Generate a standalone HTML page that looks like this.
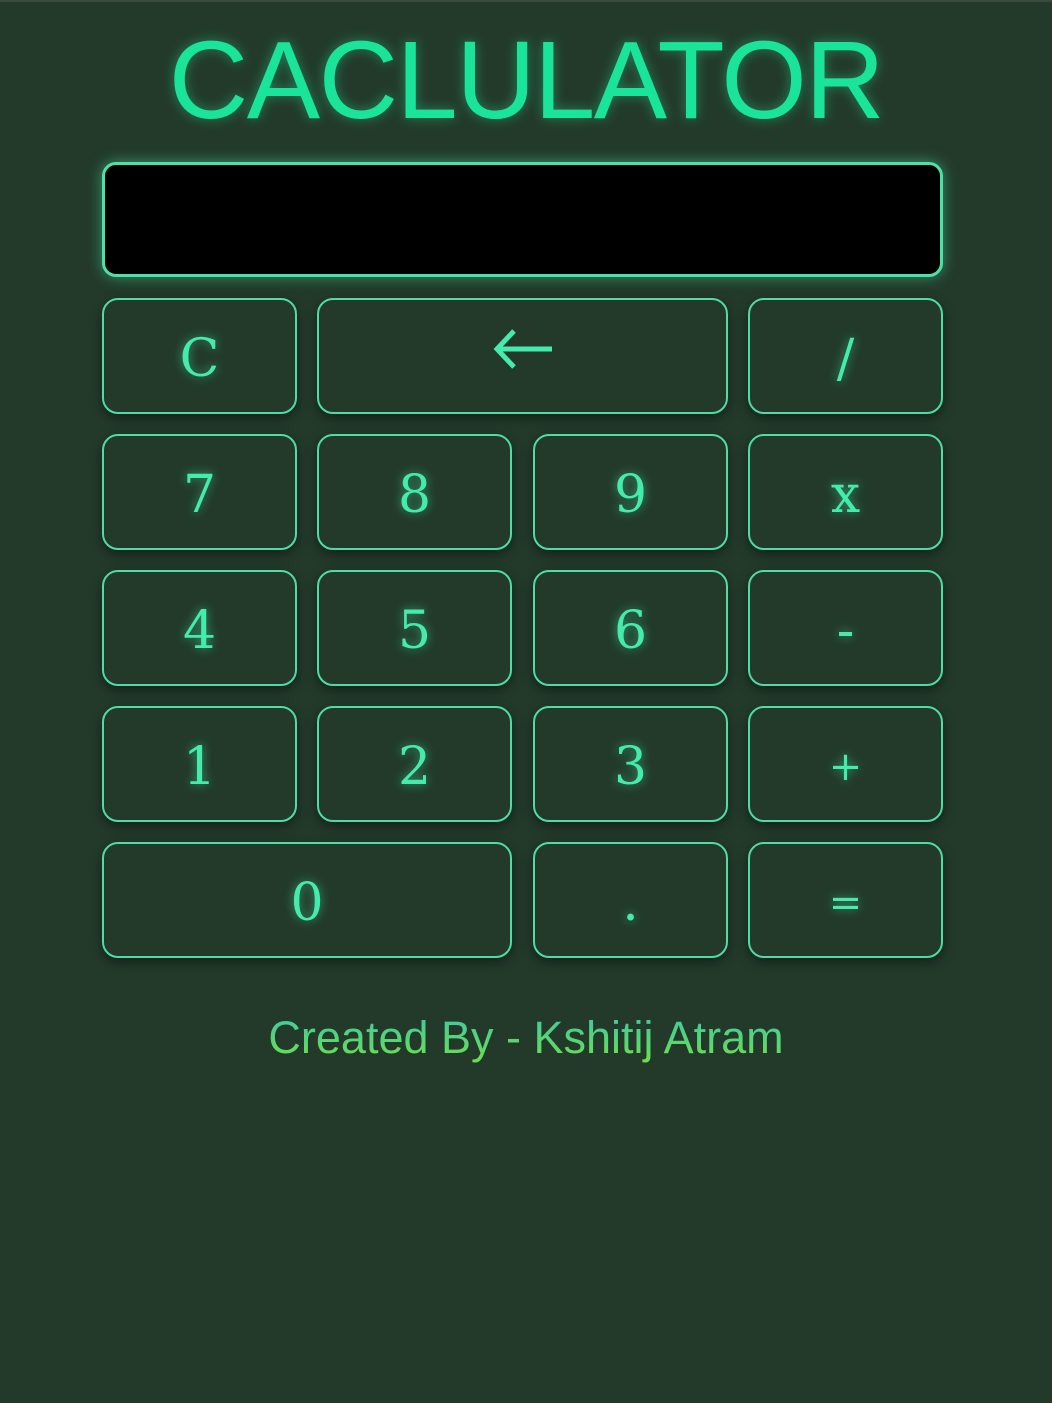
<!DOCTYPE html>
<html><head><style>
html,body{margin:0;padding:0}
body{width:1052px;height:1403px;background:#233a2b;position:relative;overflow:hidden}
.top{position:absolute;left:0;top:0;width:1052px;height:2px;background:#3a4a40}
.title{position:absolute;left:0;width:1052px;top:21px;text-align:center;font-family:"Liberation Sans",sans-serif;font-size:110px;color:#1ae39a;text-shadow:0 0 12px rgba(30,230,150,.45);letter-spacing:-1.5px;line-height:120px}
.disp{position:absolute;left:102px;top:162px;width:841px;height:115px;box-sizing:border-box;background:#000;border:3px solid #4fe0a8;border-radius:14px;box-shadow:0 0 14px rgba(60,230,160,.55)}
.b{position:absolute;height:116px;box-sizing:border-box;border:2px solid #4fdba5;border-radius:16px;background:#233a2b;box-shadow:0 4px 12px rgba(0,0,0,.45);color:#45eaad;font-family:"DejaVu Serif","Liberation Serif",serif;font-size:52px;display:flex;align-items:center;justify-content:center;text-shadow:0 0 10px rgba(60,240,170,.6);padding-top:5px}
.sm{font-size:40px}
.foot{position:absolute;left:0;width:1052px;top:1012px;text-align:center;font-family:"Liberation Sans",sans-serif;font-size:45px;background:linear-gradient(180deg,#3cc8a8,#6ee04a);-webkit-background-clip:text;background-clip:text;color:transparent}
</style></head><body>
<div class="top"></div>
<div class="title">CACLULATOR</div>
<div class="disp"></div>
<div class="b" style="left:102px;top:298px;width:195px">C</div>
<div class="b" style="left:317px;top:298px;width:411px"><svg width="62" height="44" viewBox="0 0 62 44" style="margin-top:-19px"><path d="M4 22H60M22 4L5 22L22 40" stroke="#45eaad" stroke-width="5" fill="none"/></svg></div>
<div class="b" style="left:748px;top:298px;width:195px">/</div>
<div class="b" style="left:102px;top:434px;width:195px">7</div>
<div class="b" style="left:317px;top:434px;width:195px">8</div>
<div class="b" style="left:533px;top:434px;width:195px">9</div>
<div class="b" style="left:748px;top:434px;width:195px">x</div>
<div class="b" style="left:102px;top:570px;width:195px">4</div>
<div class="b" style="left:317px;top:570px;width:195px">5</div>
<div class="b" style="left:533px;top:570px;width:195px">6</div>
<div class="b" style="left:748px;top:570px;width:195px">-</div>
<div class="b" style="left:102px;top:706px;width:195px">1</div>
<div class="b" style="left:317px;top:706px;width:195px">2</div>
<div class="b" style="left:533px;top:706px;width:195px">3</div>
<div class="b sm" style="left:748px;top:706px;width:195px">+</div>
<div class="b" style="left:102px;top:842px;width:410px">0</div>
<div class="b" style="left:533px;top:842px;width:195px">.</div>
<div class="b sm" style="left:748px;top:842px;width:195px">=</div>
<div class="foot">Created By - Kshitij Atram</div>
</body></html>
